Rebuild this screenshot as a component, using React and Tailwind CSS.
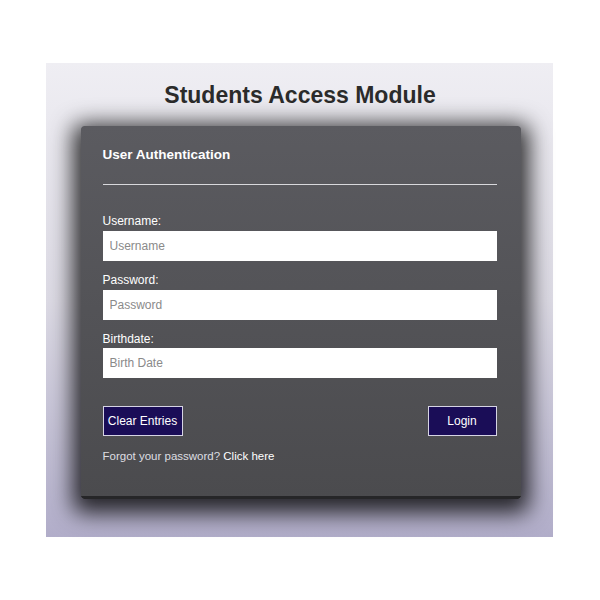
export default function App() {
  return (
    <div className="w-[600px] h-[600px] bg-white pt-[63px] pl-[46px] font-['Liberation_Sans',Arial,sans-serif]">
      <div className="w-[507px] h-[474px] bg-gradient-to-b from-[#efeef3] via-[#dcdae4] to-[#b1adc9] pt-[19px] flex flex-col items-center">
        <h1 className="text-[23px] leading-[26px] font-bold text-[#2b2b2b] pl-[1px]">Students Access Module</h1>
        <div className="mt-[18px] ml-[2px] w-[440px] h-[373px] rounded-[3px] bg-gradient-to-b from-[#5b5b60] to-[#4b4b4e] border-b-[3px] border-[#262628] shadow-[0_6px_22px_8px_rgba(0,0,0,0.8)] pl-[22px] pr-[24px] pt-[21px]">
          <h2 className="text-[13.5px] leading-[16px] font-bold text-white">User Authentication</h2>
          <hr className="mt-[21px] border-0 h-px bg-[#d8d8dc]" />
          <form className="mt-[29px] flex flex-col">
            <label className="text-[12px] leading-[14px] text-white">Username:</label>
            <input
              placeholder="Username"
              className="mt-[3px] h-[30px] bg-white px-[7px] text-[12px] text-[#333] placeholder:text-[#8a8a8a] outline-none"
            />
            <label className="mt-[12px] text-[12px] leading-[14px] text-white">Password:</label>
            <input
              type="password"
              placeholder="Password"
              className="mt-[3px] h-[30px] bg-white px-[7px] text-[12px] text-[#333] placeholder:text-[#8a8a8a] outline-none"
            />
            <label className="mt-[12px] text-[12px] leading-[14px] text-white">Birthdate:</label>
            <input
              placeholder="Birth Date"
              className="mt-[2px] h-[30px] bg-white px-[7px] text-[12px] text-[#333] placeholder:text-[#8a8a8a] outline-none"
            />
            <div className="mt-[28px] flex justify-between">
              <button type="button" className="h-[30px] w-[80px] bg-[#1a0d57] border border-[#d6d4e4] text-white text-[12px]">
                Clear Entries
              </button>
              <button type="button" className="h-[30px] w-[69px] bg-[#1a0d57] border border-[#d6d4e4] text-white text-[12px]">
                Login
              </button>
            </div>
            <p className="mt-[13px] text-[11.5px] leading-[14px] text-[#dedee2]">
              Forgot your password? <a href="#" className="text-white">Click here</a>
            </p>
          </form>
        </div>
      </div>
    </div>
  );
}
